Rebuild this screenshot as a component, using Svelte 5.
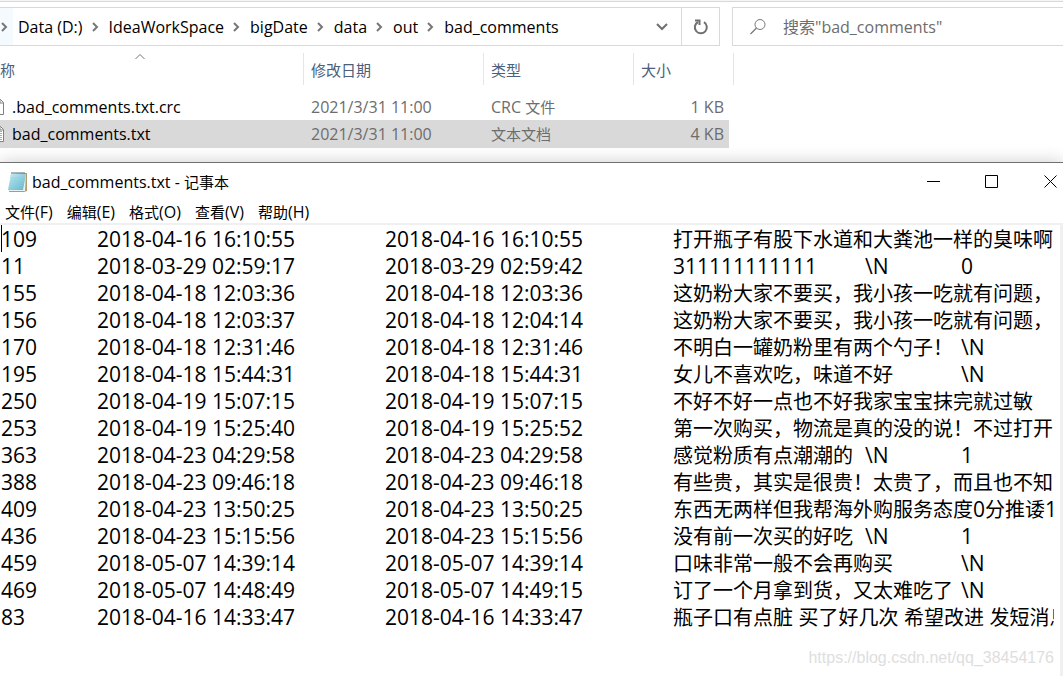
<script>
  const crumbs = ['Data (D:)', 'IdeaWorkSpace', 'bigDate', 'data', 'out', 'bad_comments'];

  const files = [
    { name: '.bad_comments.txt.crc', date: '2021/3/31 11:00', type: 'CRC 文件', size: '1 KB', selected: false },
    { name: 'bad_comments.txt', date: '2021/3/31 11:00', type: '文本文档', size: '4 KB', selected: true },
  ];

  const menus = ['文件(F)', '编辑(E)', '格式(O)', '查看(V)', '帮助(H)'];

  const lines = [
    '109\t2018-04-16 16:10:55\t2018-04-16 16:10:55\t打开瓶子有股下水道和大粪池一样的臭味啊',
    '11\t2018-03-29 02:59:17\t2018-03-29 02:59:42\t311111111111\t\\N\t0',
    '155\t2018-04-18 12:03:36\t2018-04-18 12:03:36\t这奶粉大家不要买，我小孩一吃就有问题，',
    '156\t2018-04-18 12:03:37\t2018-04-18 12:04:14\t这奶粉大家不要买，我小孩一吃就有问题，',
    '170\t2018-04-18 12:31:46\t2018-04-18 12:31:46\t不明白一罐奶粉里有两个勺子！\t\\N',
    '195\t2018-04-18 15:44:31\t2018-04-18 15:44:31\t女儿不喜欢吃，味道不好\t\\N',
    '250\t2018-04-19 15:07:15\t2018-04-19 15:07:15\t不好不好一点也不好我家宝宝抹完就过敏',
    '253\t2018-04-19 15:25:40\t2018-04-19 15:25:52\t第一次购买，物流是真的没的说！不过打开',
    '363\t2018-04-23 04:29:58\t2018-04-23 04:29:58\t感觉粉质有点潮潮的\t\\N\t1',
    '388\t2018-04-23 09:46:18\t2018-04-23 09:46:18\t有些贵，其实是很贵！太贵了，而且也不知',
    '409\t2018-04-23 13:50:25\t2018-04-23 13:50:25\t东西无两样但我帮海外购服务态度0分推诿1',
    '436\t2018-04-23 15:15:56\t2018-04-23 15:15:56\t没有前一次买的好吃\t\\N\t1',
    '459\t2018-05-07 14:39:14\t2018-05-07 14:39:14\t口味非常一般不会再购买\t\\N',
    '469\t2018-05-07 14:48:49\t2018-05-07 14:49:15\t订了一个月拿到货，又太难吃了\t\\N',
    '83\t2018-04-16 14:33:47\t2018-04-16 14:33:47\t瓶子口有点脏 买了好几次 希望改进 发短消息',
  ];

  // latin runs are set one pixel larger than the chinese ones
  function runs(text) {
    return text.split(/([\x00-\x7f]+)/).filter((part) => part !== '');
  }
</script>

{#snippet mixed(text)}{#each runs(text) as part}<span class:latin={part.charCodeAt(0) < 128}>{part}</span>{/each}{/snippet}

{#snippet chevron()}
  <svg class="chevron" viewBox="0 0 17 12" aria-hidden="true"><path d="M6 2l4 4-4 4" /></svg>
{/snippet}

<div class="screen">
  <section class="explorer">
    <div class="toolbar">
      <nav class="address">
        <span class="lead">{@render chevron()}</span>
        {#each crumbs as crumb, i}
          {#if i > 0}{@render chevron()}{/if}
          <button class="crumb">{crumb}</button>
        {/each}
        <button class="drop" aria-label="History">
          <svg width="14" height="10" viewBox="0 0 14 10"><path d="M2 2l5 5 5-5" fill="none" stroke="#707070" stroke-width="2" /></svg>
        </button>
        <button class="refresh" aria-label="Refresh">
          <svg width="16" height="18" viewBox="0 0 16 18">
            <path d="M11 4.2A6 6 0 1 1 5 4" fill="none" stroke="#707070" stroke-width="2" />
            <path d="M2 2.5h4.5v4.5" fill="none" stroke="#707070" stroke-width="2" />
          </svg>
        </button>
      </nav>
      <label class="search">
        <svg width="18" height="18" viewBox="0 0 18 18" aria-hidden="true">
          <circle cx="11" cy="6.5" r="5" fill="none" stroke="#777" />
          <path d="M7.5 10L1.5 16" stroke="#777" stroke-width="1.2" />
        </svg>
        <input type="text" aria-label="搜索" placeholder={'搜索"bad_comments"'} />
      </label>
    </div>

    <table>
      <colgroup><col class="c-name" /><col class="c-date" /><col class="c-type" /><col class="c-size" /></colgroup>
      <thead>
        <tr>
          <th class="name">称
            <svg class="sort" width="12" height="7" viewBox="0 0 12 7" aria-hidden="true"><path d="M1.5 6L6 1.5 10.500 6" fill="none" stroke="#777" /></svg>
          </th>
          <th>修改日期</th>
          <th>类型</th>
          <th>大小</th>
        </tr>
      </thead>
      <tbody>
        {#each files as file}
          <tr class:selected={file.selected}>
            <td class="name">
              <div class="file">
                <svg width="16" height="18" viewBox="0 0 16 18" aria-hidden="true">
                  <path d="M1.500 1.500h10l3 3v12h-13z" fill="#fff" stroke="#808080" />
                  <path d="M11 1.500v3.500h3.500" fill="none" stroke="#808080" />
                  {#if file.selected}
                    <path d="M3 6.500h10M3 8.500h10M3 10.500h10M3 12.500h10M3 14.500h10" stroke="#aaa" />
                  {/if}
                </svg>
                {file.name}
              </div>
            </td>
            <td><span class="latin">{file.date}</span></td>
            <td>{@render mixed(file.type)}</td>
            <td class="size"><span class="latin">{file.size}</span></td>
          </tr>
        {/each}
      </tbody>
    </table>
  </section>

  <section class="notepad">
    <header>
      <svg class="logo" width="22" height="22" viewBox="0 0 22 22" aria-hidden="true">
        <defs>
          <linearGradient id="page" x1="0" y1="0" x2="1" y2="1">
            <stop offset="0" stop-color="#c9edf4" />
            <stop offset="1" stop-color="#58b1c8" />
          </linearGradient>
        </defs>
        <path d="M4 3l16-1v18l-3 1H2z" fill="#b39a6b" />
        <path d="M4 3h15l-1 17H1z" fill="#e9f2f3" />
        <path d="M4 3h15l-3 16H1z" fill="url(#page)" />
        <path d="M4 7h14M4 9.500h13M3 12h14M3 14.500h13M2 17h14" stroke="#8fd0df" stroke-width=".6" />
        <path d="M5 3V1M7 3V1M9 3V1M11 3V1M13 3V1M15 3V1M17 3V1" stroke="#596b70" />
      </svg>
      <h1>{@render mixed('bad_comments.txt - 记事本')}</h1>
      <div class="controls">
        <button aria-label="Minimize"><svg width="13" height="13" viewBox="0 0 13 13"><path d="M0 6.500h13" /></svg></button>
        <button aria-label="Maximize"><svg width="13" height="13" viewBox="0 0 13 13"><path d="M.5.5h12v12H.5z" /></svg></button>
        <button aria-label="Close"><svg width="13" height="13" viewBox="0 0 13 13"><path d="M.5.5l12 12M12.500.5l-12 12" /></svg></button>
      </div>
    </header>

    <div class="menubar">
      {#each menus as menu}
        <button>{@render mixed(menu)}</button>
      {/each}
    </div>

    <div class="editor">
      <div class="text" role="textbox" aria-multiline="true" aria-label="bad_comments.txt" tabindex="0" contenteditable="true">
        {#each lines as line}
          <div class="line">{@render mixed(line)}</div>
        {/each}
      </div>
      <span class="caret"></span>
    </div>
    <div class="watermark">https://blog.csdn.net/qq_38454176</div>
  </section>
</div>

<style>
  :global(body) {
    background: #fff;
    overflow: hidden;
  }

  .screen {
    display: flex;
    flex-direction: column;
    min-height: 100vh;
    color: #000;
    font-family: 'Open Sans', 'Noto Sans CJK SC', sans-serif;
    font-size: 15px;
  }

  button {
    border: 0;
    padding: 0;
    background: none;
    color: inherit;
    font: inherit;
  }

  .latin {
    font-size: 16px;
  }

  /* explorer */
  .explorer {
    box-sizing: border-box;
    padding-bottom: 14px;
    border-top: 1px solid #f5f5f5;
  }

  .toolbar {
    display: flex;
    gap: 12px;
    padding-top: 5px;
    border-top: 1px solid #d9d9d9;
  }

  .address {
    display: flex;
    align-items: center;
    box-sizing: border-box;
    flex: 0 0 720px;
    height: 39px;
    border: 1px solid #d9d9d9;
    border-left: 0;
    font-size: 16px;
  }

  .lead {
    display: flex;
    align-items: center;
    justify-content: flex-end;
    width: 13px;
    height: 100%;
    background: #f5faff;
  }

  .chevron {
    flex: none;
    width: 17px;
    height: 12px;
    fill: none;
    stroke: #777;
    stroke-width: 2;
  }

  .crumb {
    padding: 0 4px 0 5px;
    white-space: nowrap;
  }

  .drop {
    display: flex;
    margin-left: auto;
    padding: 12px;
  }

  .refresh {
    display: flex;
    align-items: center;
    justify-content: center;
    width: 38px;
    height: 100%;
    border-left: 1px solid #d9d9d9;
  }

  .search {
    display: flex;
    flex: 1;
    align-items: center;
    gap: 16px;
    min-width: 0;
    padding-left: 16px;
    border: 1px solid #d9d9d9;
    border-right: 0;
  }

  .search svg {
    flex: none;
  }

  .search input {
    flex: 1;
    min-width: 0;
    border: 0;
    padding: 0;
    outline: 0;
    background: none;
    font: inherit;
    font-size: 16px;
  }

  .search input::placeholder {
    color: #6d6d6d;
    opacity: 1;
  }

  table {
    width: 729px;
    margin-top: 7px;
    border-collapse: collapse;
    table-layout: fixed;
  }

  .c-name {
    width: 304px;
  }

  .c-date {
    width: 180px;
  }

  .c-type {
    width: 150px;
  }

  th {
    position: relative;
    height: 32px;
    padding: 0 0 0 7px;
    color: #4c607a;
    font-weight: 400;
    text-align: left;
  }

  th::after {
    content: '';
    position: absolute;
    top: 0;
    right: 0;
    width: 1px;
    height: 100%;
    background: #e5e5e5;
  }

  th:last-child::after {
    right: -5px;
  }

  .sort {
    position: absolute;
    top: 0;
    left: 134px;
  }

  thead::after {
    content: '';
    display: block;
    height: 8px;
  }

  td {
    height: 27px;
    padding: 0 0 0 7px;
    color: #6d6d6d;
    line-height: 20px;
  }

  th.name,
  td.name {
    padding-left: 0;
  }

  .file {
    display: flex;
    align-items: center;
    gap: 7px;
    margin-left: -11px;
    color: #000;
    font-size: 16px;
  }

  td.size {
    padding-right: 5px;
    text-align: right;
  }

  .selected {
    background: #d9d9d9;
  }

  .selected td {
    height: 28px;
  }

  /* notepad */
  .notepad {
    position: relative;
    display: flex;
    flex: 1;
    flex-direction: column;
    border-top: 1px solid #707070;
    background: #fff;
    box-shadow: 0 0 16px rgba(0, 0, 0, 0.2);
  }

  header {
    display: flex;
    align-items: center;
    height: 37px;
    padding-left: 7px;
  }

  h1 {
    margin: 0 0 0 3px;
    font-size: 15px;
    font-weight: 400;
  }

  .controls {
    display: flex;
    margin-left: auto;
  }

  .controls button {
    display: flex;
    justify-content: center;
    width: 58px;
  }

  .controls button:last-child {
    width: 26px;
    margin-left: 17px;
  }

  .controls path {
    fill: none;
    stroke: #000;
  }

  .menubar {
    display: flex;
    gap: 14px;
    height: 23px;
    padding-left: 5px;
    border-bottom: 2px solid #f0f0f0;
    line-height: 25px;
  }

  .editor {
    position: relative;
    flex: 1;
    padding: 0 6px 0 1px;
    border-right: 3px solid #f0f0f0;
  }

  .text {
    overflow: hidden;
    outline: 0;
    font-size: 20px;
    line-height: 28px;
    tab-size: 96px;
  }

  .text .latin {
    font-size: 21px;
  }

  .line {
    height: 27px;
    white-space: pre;
  }

  .caret {
    position: absolute;
    top: 0;
    left: 1px;
    width: 1px;
    height: 27px;
    background: #000;
  }

  .watermark {
    position: absolute;
    right: 9px;
    bottom: 9px;
    color: #dedede;
    font-family: 'Liberation Sans', sans-serif;
    font-size: 16px;
  }
</style>
